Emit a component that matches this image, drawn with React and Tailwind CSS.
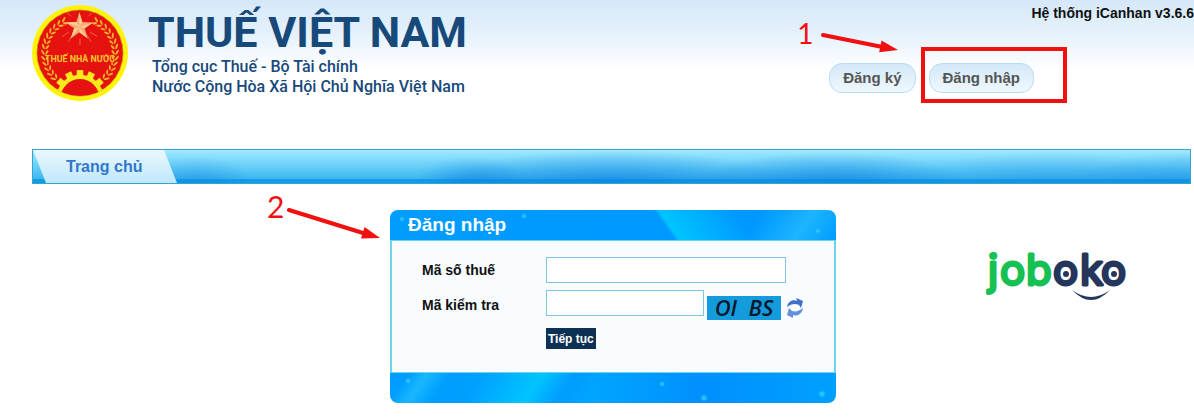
import React from "react";

const LEAVES = [-64, -55, -46, -37, -28, -19, -10, -1, 8, 17, 26, 35, 44];
const TEETH = [-75, -50, -25, 0, 25, 50, 75];

function Emblem() {
  return (
    <svg
      className="w-24 h-24 shrink-0"
      viewBox="0 0 292 292"
      role="img"
      aria-label="Thuế Nhà Nước"
    >
      <defs>
        <clipPath id="emblem-disc">
          <circle cx="146" cy="146" r="131" />
        </clipPath>
      </defs>
      <circle cx="146" cy="146" r="146" fill="#fdf30f" />
      <circle cx="146" cy="146" r="131" fill="#e5120f" stroke="#c98a0a" strokeWidth="2" />

      {/* Rays and star */}
      <g stroke="#f4604a" strokeWidth="3">
        <path d="M146 102V122M112 82L92 96M176 82L198 96M122 92L110 112M168 92L180 112M104 60L86 62M186 60L206 62M118 34L108 24M172 34L182 24" />
      </g>
      <path
        d="M144 22L153 52L186 53L160 71L170 102L144 83L118 102L128 71L102 53L135 52Z"
        fill="#f8a778"
      />
      <path
        d="M144 22L144 67L153 52ZM186 53L144 67L160 71ZM170 102L144 67L144 83ZM118 102L144 67L128 71ZM102 53L144 67L135 52Z"
        fill="#fbd08f"
      />

      {/* Laurel branches */}
      <g fill="#f3b52a">
        {LEAVES.map((angle) => (
          <g key={angle} transform={`rotate(${-angle} 146 146)`}>
            <ellipse cx="33" cy="146" rx="3" ry="9" transform="rotate(-32 33 146)" />
            <ellipse cx="45" cy="146" rx="3" ry="8" transform="rotate(32 45 146)" />
          </g>
        ))}
        {LEAVES.map((angle) => (
          <g key={angle} transform={`rotate(${angle} 146 146)`}>
            <ellipse cx="259" cy="146" rx="3" ry="9" transform="rotate(32 259 146)" />
            <ellipse cx="247" cy="146" rx="3" ry="8" transform="rotate(-32 247 146)" />
          </g>
        ))}
      </g>

      {/* Gear */}
      <g clipPath="url(#emblem-disc)">
        {TEETH.map((angle) => (
          <rect
            key={angle}
            x="136"
            y="198"
            width="20"
            height="24"
            fill="#fbe81a"
            transform={`rotate(${angle} 146 284)`}
          />
        ))}
        <circle cx="146" cy="284" r="72" fill="#fbe81a" />
        <circle cx="146" cy="284" r="59" fill="#e5120f" />
      </g>

      <rect x="50" y="144" width="192" height="34" fill="#e5120f" />
      <text
        x="146"
        y="174"
        textAnchor="middle"
        fontSize="27"
        fontWeight="700"
        fill="#f8c62a"
        fontFamily="Roboto, sans-serif"
      >
        THUẾ NHÀ NƯỚC
      </text>
    </svg>
  );
}

function JobokoLogo() {
  return (
    <svg className="w-36 h-14" viewBox="0 0 144 56" role="img" aria-label="joboko">
      <g
        fontFamily="Inter, sans-serif"
        fontSize="42"
        fontWeight="400"
        strokeWidth="3"
        strokeLinejoin="round"
      >
        <text x="2 14 40" y="41" fill="#16c053" stroke="#16c053">
          job
        </text>
        <text x="67 94 115" y="41" fill="#24365c" stroke="#24365c">
          oko
        </text>
      </g>
      <circle cx="80" cy="30" r="3" fill="#24365c" />
      <circle cx="128" cy="30" r="3" fill="#24365c" />
      <path d="M86 46Q105 60 124 46Q105 66 86 46Z" fill="#24365c" />
    </svg>
  );
}

function Arrow({ className, width, height }) {
  // Points to the lower right corner of its box
  const angle = (Math.atan2(height - 10, width - 4) * 180) / Math.PI;
  return (
    <svg
      className={className}
      width={width}
      height={height}
      viewBox={`0 0 ${width} ${height}`}
      aria-hidden="true"
    >
      <line
        x1="2"
        y1="5"
        x2={width - 14}
        y2={5 + ((height - 10) * (width - 16)) / (width - 4)}
        stroke="#f01010"
        strokeWidth="4"
        strokeLinecap="round"
      />
      <path
        d="M0 0L-18 -6L-18 6Z"
        fill="#f01010"
        transform={`translate(${width - 1} ${height - 5}) rotate(${angle})`}
      />
    </svg>
  );
}

function RefreshIcon() {
  return (
    <svg className="w-4 h-5" viewBox="0 0 16 20" aria-hidden="true">
      <path d="M0 9C1 3 6 1 10 3L9 0L16 3L14 10L12 7C8 5 4 6 0 9Z" fill="#3f6fcb" />
      <path d="M16 10C15 16 10 19 6 17L6 20L0 17L2 10L5 13C9 14 12 13 16 10Z" fill="#6490da" />
    </svg>
  );
}

function Header() {
  const pill =
    "h-[30px] px-[13px] rounded-[13px] border border-[#b9dcf5] bg-linear-to-b from-[#d3e8f9] to-[#f0f8fe] text-[15px] leading-5 font-bold text-[#555] whitespace-nowrap";

  return (
    <header className="flex justify-between h-[149px] pl-8">
      <div className="flex items-start gap-5 pt-[5px] text-[#17497a]">
        <Emblem />
        <div className="pt-0.5 font-[Roboto,sans-serif] whitespace-nowrap">
          <h1 className="text-[43px] leading-[50px] font-bold">THUẾ VIỆT NAM</h1>
          <p className="pl-1 text-base leading-5 font-medium">
            Tổng cục Thuế - Bộ Tài chính
            <br />
            Nước Cộng Hòa Xã Hội Chủ Nghĩa Việt Nam
          </p>
        </div>
      </div>

      <div className="flex flex-col items-end gap-10 pt-1">
        <p className="text-sm leading-[19px] font-bold text-[#111] whitespace-nowrap">
          Hệ thống iCanhan v3.6.6
        </p>
        <div className="relative flex gap-[13px] mr-40">
          <button type="button" className={pill}>
            Đăng ký
          </button>
          <div className="relative">
            <button type="button" className={pill}>
              Đăng nhập
            </button>
            <div className="absolute -left-2 -top-4 w-[146px] h-14 border-4 border-[#f01010]" />
          </div>
          <span className="absolute -left-8 -top-[46px] font-[Lato,sans-serif] text-[28px] leading-8 font-normal text-[#f01010]">
            1
          </span>
          <Arrow className="absolute -left-2 -top-[33px]" width={78} height={25} />
        </div>
      </div>
    </header>
  );
}

function NavBar() {
  return (
    <nav className="ml-8 mr-[3px] h-[35px] border border-[#35a5cf] bg-[linear-gradient(to_bottom,transparent_29px,#008be399_29px),radial-gradient(ellipse_60px_30px_at_14%_110%,#0877e066,transparent),radial-gradient(ellipse_60px_30px_at_38%_110%,#0877e088,transparent),radial-gradient(ellipse_180px_36px_at_50%_110%,#0877e0aa,transparent),radial-gradient(ellipse_140px_34px_at_69%_110%,#0877e0aa,transparent),radial-gradient(ellipse_160px_34px_at_88%_110%,#1a8ae677,transparent),radial-gradient(ellipse_120px_34px_at_100%_110%,#1a8ae699,transparent),linear-gradient(to_bottom,#a0e9fd,#66cef8_50%,#2eb0ec)]">
      <a
        href="#home"
        className="block w-36 h-full pl-[33px] [clip-path:polygon(0_0,131px_0,100%_100%,13px_100%)] bg-linear-to-b from-[#eaf7fd] to-[#bfe8fc] text-base leading-[33px] font-bold text-[#3277cc]"
      >
        Trang chủ
      </a>
    </nav>
  );
}

function LoginPanel() {
  return (
    <form className="relative w-[446px] rounded-lg text-sm font-bold">
      <h2 className="h-[30px] pl-[18px] rounded-t-lg bg-[radial-gradient(circle_at_12px_9px,#3fd0ff_0,transparent_3px),radial-gradient(circle_at_134px_6px,#3fd0ff_0,transparent_3px),radial-gradient(circle_at_428px_21px,#3fd0ff_0,transparent_3px),linear-gradient(55deg,transparent_61%,#00c4ff_62%,#00aaff_72%,transparent_78%),linear-gradient(125deg,#009cff,#0098ff_80%,#1cb5ff_91%,#009cff)] text-[19px] leading-[30px] text-white">
        Đăng nhập
      </h2>

      <div className="flex flex-col items-start gap-[7px] h-[133px] pt-4 pl-[30px] border-x-2 border-y border-[#6fd3e8] bg-[#f8fcff]">
        <div className="flex items-center">
          <label htmlFor="taxCode" className="w-[124px] text-[#111]">
            Mã số thuế
          </label>
          <input
            id="taxCode"
            type="text"
            className="w-60 h-[26px] px-1 border border-[#82c2e2] bg-white outline-none"
          />
        </div>
        <div className="flex items-center">
          <label htmlFor="captcha" className="w-[124px] pt-1 text-[#111]">
            Mã kiểm tra
          </label>
          <input
            id="captcha"
            type="text"
            className="w-[158px] h-[26px] px-1 border border-[#82c2e2] bg-white outline-none"
          />
          <div className="flex items-center gap-1.5 h-[26px] pt-[10px] ml-[3px]">
            <span className="w-[74px] h-6 bg-[#149bdc] text-center font-['Open_Sans',sans-serif] text-[22px] leading-[22px] font-semibold italic text-[#08182a] whitespace-pre">
              {"OI  BS"}
            </span>
            <button type="button" aria-label="Đổi mã kiểm tra">
              <RefreshIcon />
            </button>
          </div>
        </div>
        <button
          type="submit"
          className="h-[21px] ml-[124px] mt-[5px] px-0.5 bg-[#0d3154] text-xs leading-5 font-bold text-white"
        >
          Tiếp tục
        </button>
      </div>

      <div className="h-[30px] rounded-b-lg bg-[radial-gradient(circle_at_18px_8px,#3fd0ff_0,transparent_3px),radial-gradient(circle_at_272px_11px,#3fd0ff_0,transparent_3px),radial-gradient(circle_at_314px_25px,#3fd0ff_0,transparent_4px),radial-gradient(circle_at_432px_21px,#3fd0ff_0,transparent_4px),linear-gradient(125deg,transparent_4%,#18b8ff_8%,transparent_13%,transparent_20%,#00c4ff_33%,#009cff_40%,transparent_46%),linear-gradient(90deg,#009cff,#00a5ff_45%,#0090ff_70%,#00a0ff)]" />

      {/* Step marker */}
      <span className="absolute -left-[123px] -top-6 font-[Lato,sans-serif] text-[30px] leading-10 font-normal text-[#f01010]">
        2
      </span>
      <Arrow className="absolute -left-[103px] -top-[5px]" width={94} height={38} />
    </form>
  );
}

function App() {
  return (
    <div className="relative min-h-screen bg-white bg-[linear-gradient(to_bottom,#d5e8f9,#e6f2fc_35px,#fff_70px)] font-['Liberation_Sans',Arial,sans-serif]">
      <Header />
      <NavBar />
      <main className="flex justify-center ml-8 pt-[26px] pb-4">
        <LoginPanel />
      </main>
      <div className="absolute right-16 top-[244px]">
        <JobokoLogo />
      </div>
    </div>
  );
}

export default App;
